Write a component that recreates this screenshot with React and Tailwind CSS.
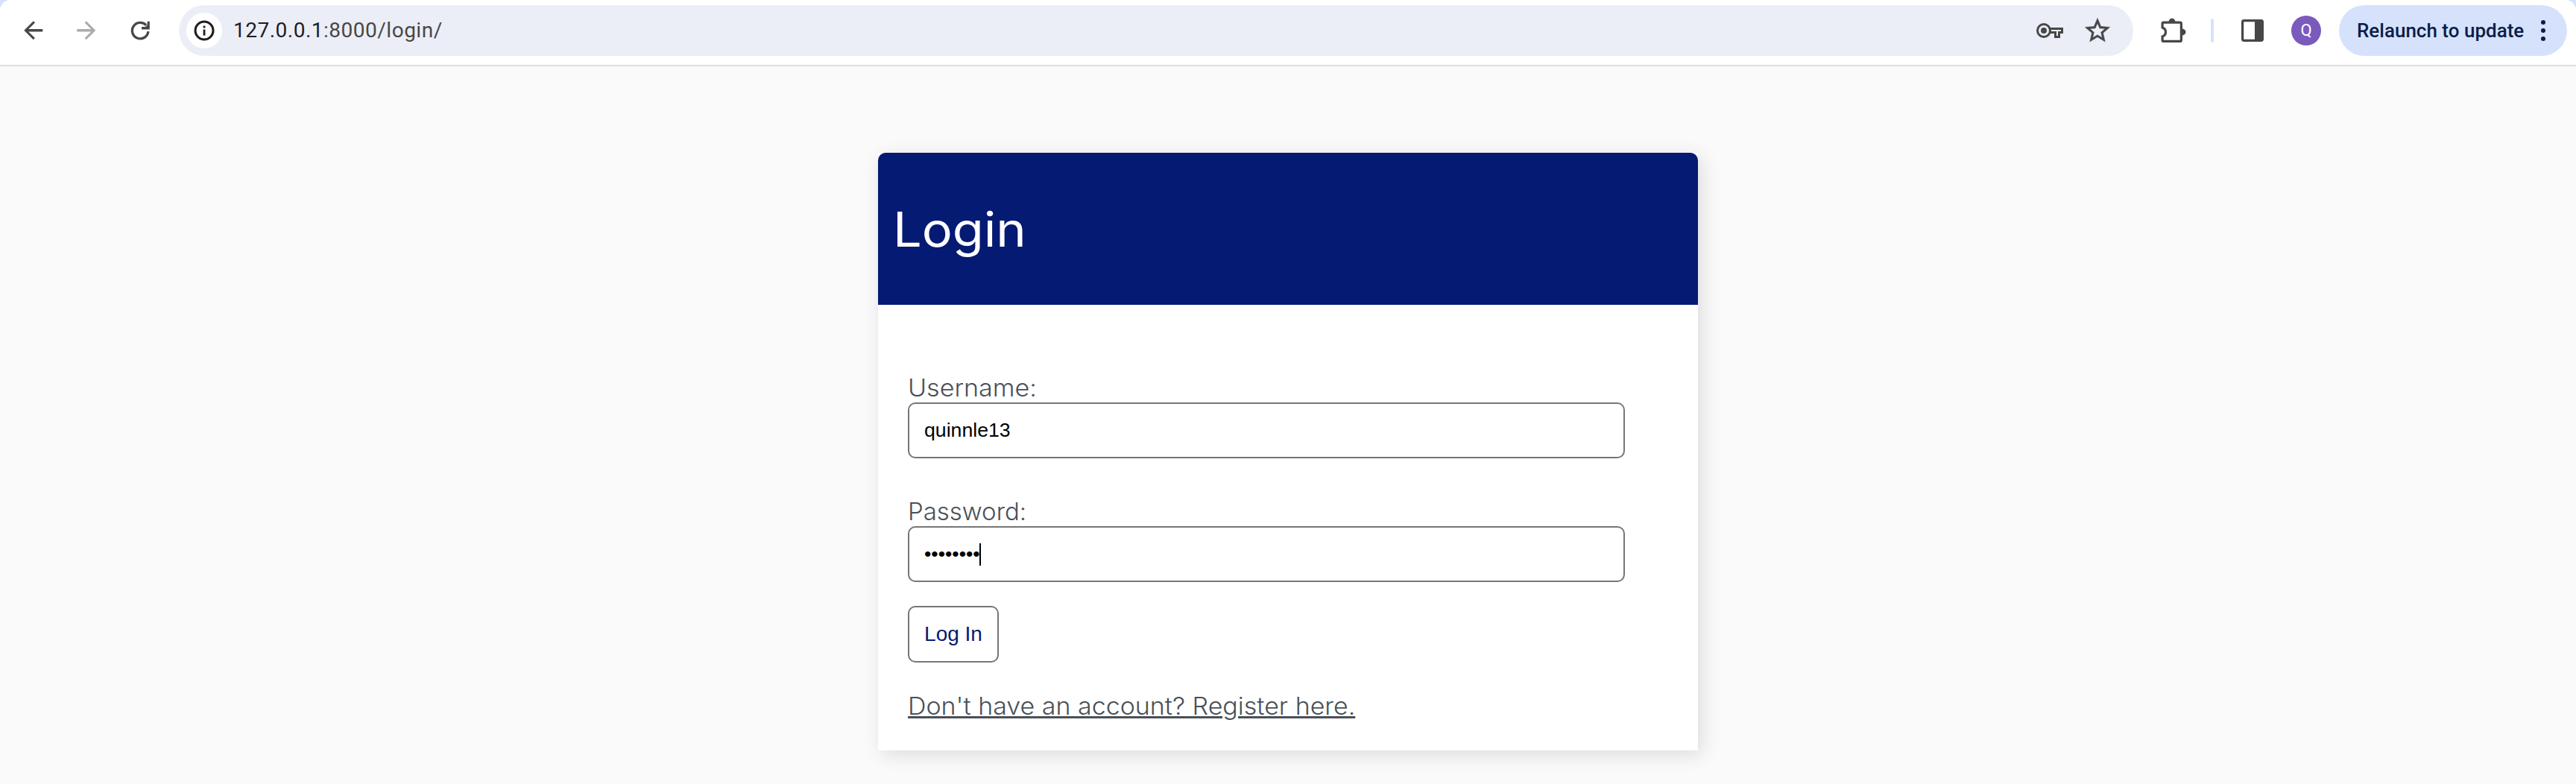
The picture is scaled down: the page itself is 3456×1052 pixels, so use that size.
import React from "react";

function ArrowIcon({ className }) {
  return (
    <svg viewBox="0 0 24 24" className={`h-[37.5px] w-[37.5px] shrink-0 ${className}`} fill="currentColor">
      <path d="M20 10.95H7.83l5.59-5.54L12 4l-8 8 8 8 1.41-1.41L7.83 13.05H20z" />
    </svg>
  );
}

function ReloadIcon() {
  return (
    <svg viewBox="0 0 36 36" className="ml-[35.5px] h-9 w-9 shrink-0 text-[#474747]">
      <path d="M28.9 19.2A10.8 10.8 0 1 1 26.2 10.9" fill="none" stroke="currentColor" strokeWidth="3.3" />
      <path d="M30.8 5.8V16.4H20V13.1H25.2L27.6 10.8V5.8Z" fill="currentColor" />
    </svg>
  );
}

function InfoIcon() {
  return (
    <svg viewBox="0 0 28 28" className="h-7 w-7 text-[#1f1f1f]">
      <circle cx="14" cy="14" r="12" fill="none" stroke="currentColor" strokeWidth="3" />
      <rect x="12.6" y="12.6" width="2.8" height="8" fill="currentColor" />
      <rect x="12.6" y="7.6" width="2.8" height="2.9" fill="currentColor" />
    </svg>
  );
}

function KeyIcon() {
  return (
    <svg viewBox="0 0 40 40" className="h-10 w-10" fill="none" stroke="currentColor" strokeWidth="3">
      <path d="M20.3 17.5H36.5V22.6H32.5V28.5H27.5V22.6H20.3" />
      <circle cx="12" cy="20" r="8.5" />
      <circle cx="12" cy="20" r="4" fill="currentColor" stroke="none" />
    </svg>
  );
}

function StarIcon() {
  return (
    <svg viewBox="0 0 24 24" className="ml-6 h-10 w-10" fill="currentColor">
      <path d="M22 9.24l-7.19-.62L12 2 9.19 8.63 2 9.24l5.46 4.73L5.82 21 12 17.27 18.18 21l-1.63-7.03L22 9.24zM12 15.4l-3.76 2.27 1-4.28-3.32-2.88 4.38-.38L12 6.1l1.71 4.04 4.38.38-3.32 2.88 1 4.28L12 15.4z" stroke="currentColor" strokeWidth="0.25" />
    </svg>
  );
}

function PuzzleIcon() {
  return (
    <svg viewBox="0 0 40 40" className="ml-[34px] h-10 w-10 shrink-0">
      <path d="M6.6 9.1H28.9Q30.4 9.1 30.4 10.6V32.9Q30.4 34.4 28.9 34.4H6.6Q5.1 34.4 5.1 32.9V27.9C8 26.9 9.5 24.6 9.5 22S8 17.1 5.1 16.1V10.6Q5.1 9.1 6.6 9.1Z" fill="none" stroke="currentColor" strokeWidth="3.2" />
      <path d="M13.5 9a4.5 5.5 0 0 1 9 0zM31 17.5a5.5 4.5 0 0 1 0 9z" fill="currentColor" />
    </svg>
  );
}

function SidePanelIcon() {
  return (
    <svg viewBox="0 0 30 30" className="ml-[37px] h-[30px] w-[30px] shrink-0">
      <rect x="1.6" y="1.6" width="26.8" height="26.8" rx="1.8" fill="none" stroke="currentColor" strokeWidth="3.2" />
      <path d="M18 1.5H28V28.5H18Z" fill="currentColor" />
    </svg>
  );
}

function Toolbar() {
  return (
    <div className="h-[89px] bg-[#d3e3fd]">
      <header className="flex h-[89px] items-center rounded-t-[14px] border-b-2 border-[#dfdfdf] bg-white pr-3 pb-[5px] pl-[25.5px] font-['Roboto',sans-serif] text-[#474747]">
        <ArrowIcon className="text-[#474747]" />
        <ArrowIcon className="ml-[34px] rotate-180 text-[#ababab]" />
        <ReloadIcon />
        <div className="ml-[34px] flex h-[68px] flex-1 items-center rounded-full bg-[#ebeef7] pr-7 pl-2.5">
          <div className="flex h-12 w-12 items-center justify-center rounded-full bg-white">
            <InfoIcon />
          </div>
          <div className="ml-[15px] flex-1 text-[28px] leading-none tracking-[0.5px] whitespace-nowrap text-[#474747]">
            <span className="text-[#1f1f1f]">127.0.0.1</span>:8000/login/
          </div>
          <KeyIcon />
          <StarIcon />
        </div>
        <PuzzleIcon />
        <div className="ml-[30px] h-8 w-1 rounded-full bg-[#d3e3fd]" />
        <SidePanelIcon />
        <div className="ml-[37px] flex h-10 w-10 items-center justify-center rounded-full bg-[#7b5abd] text-[22px] leading-none text-white">Q</div>
        <button className="ml-6 flex h-[68px] w-[306px] items-center rounded-full bg-[#d6e2fb] pl-6 text-[26px] leading-none font-medium whitespace-nowrap text-[#0b1d49]">
          Relaunch to update
          <svg viewBox="0 0 6 28" className="ml-[22.5px] h-7 w-1.5" fill="currentColor">
            <circle cx="3" cy="3" r="3" />
            <circle cx="3" cy="14" r="3" />
            <circle cx="3" cy="25" r="3" />
          </svg>
        </button>
      </header>
    </div>
  );
}

const label = "block origin-left text-[32px] leading-[38px] font-light whitespace-nowrap";
const field =
  "flex h-[75px] w-[962px] items-center rounded-[10px] border-2 border-[#767676] bg-white px-5 font-['Liberation_Sans',sans-serif] text-[26.67px] leading-none text-black";

export default function App() {
  return (
    <div className="h-[1052px] overflow-hidden bg-[#fafafa]">
      <Toolbar />
      <main className="mx-auto mt-[116px] h-[802px] w-[1100px] bg-white font-['Inter',sans-serif] text-[#495057] shadow-[5px_6px_24px_rgba(0,0,0,0.12)]">
        <div className="h-[204px] rounded-t-[10px] bg-[#051a72] px-5 pt-[63px]">
          <h1 className="origin-left scale-x-[1.07] text-[64px] leading-[80px] font-normal text-white">Login</h1>
        </div>
        <form className="flex flex-col items-start pt-[93px] pl-10">
          <label className={`${label} scale-x-[1.065]`}>Username:</label>
          <div className={field}>quinnle13</div>
          <label className={`${label} mt-[53px] scale-x-[1.03]`}>Password:</label>
          <div className={field}>
            ••••••••
            <span className="-ml-px h-[30px] w-0.5 bg-black" />
          </div>
          <button
            type="button"
            className="mt-8 flex h-[76px] w-[122px] items-center justify-center rounded-[10px] border-2 border-[#767676] bg-white font-['Liberation_Sans',sans-serif] text-[28px] leading-none whitespace-nowrap text-[#051a72]"
          >
            Log In
          </button>
          <a className={`${label} mt-10 scale-x-[1.062] underline decoration-[3px] underline-offset-[2px]`}>
            Don't have an account? Register here.
          </a>
        </form>
      </main>
    </div>
  );
}
